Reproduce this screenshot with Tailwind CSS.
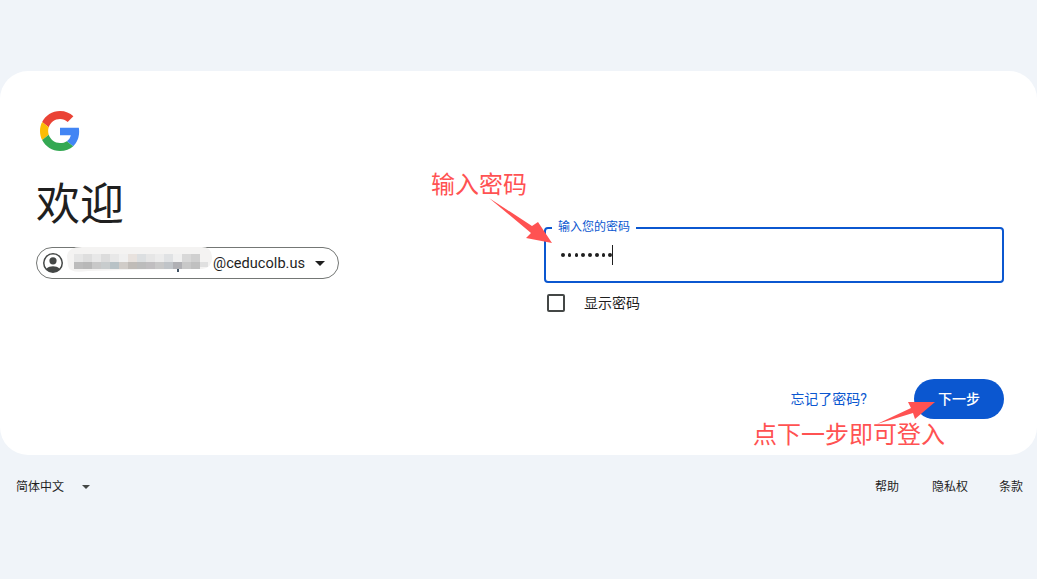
<!DOCTYPE html>
<html lang="zh-CN">
<head>
    <meta charset="UTF-8">
    <title>登录</title>
    <script src="https://cdn.jsdelivr.net/npm/@tailwindcss/browser@4"></script>
</head>
<body class="relative h-[579px] w-[1037px] overflow-hidden bg-[#f0f4f9] font-['Roboto','Noto_Sans_CJK_SC',sans-serif] text-[#1f1f1f]">
    <!-- Card -->
    <main class="mt-[71px] flex h-[384px] rounded-[28px] bg-white pl-[36px] pr-[33px]">
        <!-- Left column -->
        <section class="w-[508px] pt-[40px]">
            <svg class="ml-[4px] h-[40px] w-[40px]" viewBox="0 0 48 48">
                <path fill="#EA4335" d="M24 9.5c3.54 0 6.71 1.22 9.21 3.6l6.85-6.85C35.9 2.38 30.47 0 24 0 14.62 0 6.51 5.38 2.56 13.22l7.98 6.19C12.43 13.72 17.74 9.5 24 9.5z"/>
                <path fill="#4285F4" d="M46.98 24.55c0-1.57-.15-3.09-.38-4.55H24v9.02h12.94c-.58 2.96-2.26 5.48-4.78 7.18l7.73 6c4.51-4.18 7.09-10.36 7.09-17.65z"/>
                <path fill="#FBBC05" d="M10.53 28.59c-.48-1.45-.76-2.99-.76-4.59s.27-3.14.76-4.59l-7.98-6.19C.92 16.46 0 20.12 0 24c0 3.88.92 7.54 2.56 10.78l7.97-6.19z"/>
                <path fill="#34A853" d="M24 48c6.48 0 11.93-2.13 15.89-5.81l-7.73-6c-2.15 1.45-4.92 2.3-8.16 2.3-6.26 0-11.57-4.22-13.47-9.91l-7.98 6.19C6.51 42.62 14.62 48 24 48z"/>
            </svg>
            <h1 class="mt-[24px] h-[60px] text-[44px] leading-[60px] font-normal">欢迎</h1>
            <div class="relative mt-[12px] flex h-[32px] w-[303px] items-center rounded-full border border-[#747775] pl-[4px] pr-[13px]">
                <svg class="h-[24px] w-[24px]" viewBox="0 0 24 24" fill="#444746">
                    <path fill-rule="evenodd" d="M12 2a10 10 0 1 0 0 20 10 10 0 0 0 0-20zm0 1.600a8.400 8.400 0 0 1 6.400 13.800c-1.600-1.400-3.900-2.100-6.400-2.100s-4.800.7-6.400 2.100A8.400 8.400 0 0 1 12 3.600z"/>
                    <circle cx="12" cy="9.800" r="3.600"/>
                </svg>
                <span class="ml-auto text-[14.600px] leading-[20px] text-[#1f1f1f]">@ceducolb.us</span>
                <span class="ml-[10px] h-0 w-0 border-x-[5px] border-t-[5px] border-x-transparent border-t-[#1f1f1f]"></span>
                <!-- Mosaic over the address -->
                <svg class="absolute left-[27px] top-[-4px] h-[30px] w-[150px]" viewBox="0 0 150 30">
                    <path fill="#f4f3f2" d="M3 12Q4 3 18 3H138Q148 3 148 14Q148 24 138 25Q80 25 24 27Q6 30 4 22Z"/>
                    <rect x="10" y="10" width="9" height="8" fill="#e6e6e6"/>
                    <rect x="19" y="10" width="9" height="8" fill="#dedede"/>
                    <rect x="28" y="10" width="9" height="8" fill="#e8e8e8"/>
                    <rect x="37" y="10" width="9" height="8" fill="#dcdcdc"/>
                    <rect x="46" y="10" width="9" height="8" fill="#e8e8e8"/>
                    <rect x="55" y="10" width="9" height="8" fill="#f0f0f0"/>
                    <rect x="64" y="10" width="9" height="8" fill="#e8e2de"/>
                    <rect x="73" y="10" width="9" height="8" fill="#dcdfe1"/>
                    <rect x="82" y="10" width="9" height="8" fill="#e6e6e6"/>
                    <rect x="91" y="10" width="9" height="8" fill="#ececec"/>
                    <rect x="100" y="10" width="9" height="8" fill="#e0e2e4"/>
                    <rect x="109" y="10" width="9" height="8" fill="#f0f0f0"/>
                    <rect x="118" y="10" width="9" height="8" fill="#d8d8d8"/>
                    <rect x="127" y="10" width="9" height="8" fill="#d0d0d0"/>
                    <rect x="10" y="18" width="9" height="7" fill="#bcbcbc"/>
                    <rect x="19" y="18" width="9" height="7" fill="#b8b8b8"/>
                    <rect x="28" y="18" width="9" height="7" fill="#c8c8c8"/>
                    <rect x="37" y="18" width="9" height="7" fill="#c8cccd"/>
                    <rect x="46" y="18" width="9" height="7" fill="#b8c2c6"/>
                    <rect x="55" y="18" width="9" height="7" fill="#d0ccc8"/>
                    <rect x="64" y="18" width="9" height="7" fill="#c0bcb8"/>
                    <rect x="73" y="18" width="9" height="7" fill="#bcbcbc"/>
                    <rect x="82" y="18" width="9" height="7" fill="#c0bec0"/>
                    <rect x="91" y="18" width="9" height="7" fill="#c8c8c8"/>
                    <rect x="100" y="18" width="9" height="7" fill="#c0c4c8"/>
                    <rect x="109" y="18" width="9" height="7" fill="#b0b0b4"/>
                    <rect x="118" y="18" width="9" height="7" fill="#c8c8c8"/>
                    <rect x="127" y="18" width="9" height="7" fill="#c0c0c0"/>
                    <rect x="136" y="18" width="8" height="5" fill="#e0e0e0"/>
                    <rect x="113" y="25" width="2" height="3" fill="#445566"/>
                </svg>
            </div>
        </section>

        <!-- Right column -->
        <section class="flex w-[460px] flex-col pt-[156px]">
            <div class="relative flex h-[56px] items-center rounded-[4px] border-2 border-[#0b57d0] pl-[15px]">
                <span class="absolute left-[6px] top-[-9px] bg-white px-[6px] text-[12px] leading-[14px] whitespace-nowrap text-[#0b57d0]">输入您的密码</span>
                <span class="flex gap-[3.200px]">
                    <i class="h-[3.600px] w-[3.600px] rounded-full bg-[#1f1f1f]"></i>
                    <i class="h-[3.600px] w-[3.600px] rounded-full bg-[#1f1f1f]"></i>
                    <i class="h-[3.600px] w-[3.600px] rounded-full bg-[#1f1f1f]"></i>
                    <i class="h-[3.600px] w-[3.600px] rounded-full bg-[#1f1f1f]"></i>
                    <i class="h-[3.600px] w-[3.600px] rounded-full bg-[#1f1f1f]"></i>
                    <i class="h-[3.600px] w-[3.600px] rounded-full bg-[#1f1f1f]"></i>
                    <i class="h-[3.600px] w-[3.600px] rounded-full bg-[#1f1f1f]"></i>
                    <i class="h-[3.600px] w-[3.600px] rounded-full bg-[#1f1f1f]"></i>
                </span>
                <span class="h-[20px] w-px bg-[#1f1f1f]"></span>
            </div>
            <label class="mt-[11px] flex h-[18px] items-center pl-[3px]">
                <span class="h-[18px] w-[18px] rounded-[2px] border-2 border-[#444746]"></span>
                <span class="ml-[19px] text-[14px] leading-[20px]">显示密码</span>
            </label>
            <div class="mt-[67px] flex items-center justify-end">
                <a class="mr-[47px] text-[14px] leading-[20px] whitespace-nowrap text-[#0b57d0]">忘记了密码?</a>
                <button class="h-[40px] w-[90px] rounded-full bg-[#0b57d0] text-[14px] font-medium text-white">下一步</button>
            </div>
        </section>
    </main>

    <!-- Footer -->
    <footer class="mt-[24px] flex h-[16px] items-center pl-[16px] pr-[14px] text-[12px] leading-[16px]">
        <span>简体中文</span>
        <span class="ml-[18px] h-0 w-0 border-x-[4px] border-t-[4px] border-x-transparent border-t-[#444746]"></span>
        <span class="ml-auto">帮助</span>
        <span class="ml-[33px]">隐私权</span>
        <span class="ml-[31px]">条款</span>
    </footer>

    <!-- Annotations drawn over the page -->
    <span class="absolute left-[431px] top-[169px] text-[24px] leading-[32px] whitespace-nowrap text-[#ff5252]">输入密码</span>
    <span class="absolute left-[753px] top-[419px] text-[24px] leading-[32px] whitespace-nowrap text-[#ff5252]">点下一步即可登入</span>
    <svg class="absolute left-0 top-0 h-[579px] w-[1037px]" viewBox="0 0 1037 579" fill="#ff5252">
        <polygon points="489,198 532,226 538,222 552,243 526,238 531,233"/>
        <polygon points="877,424 911,408 908,402 935,402 915,419 913,413"/>
    </svg>
</body>
</html>
